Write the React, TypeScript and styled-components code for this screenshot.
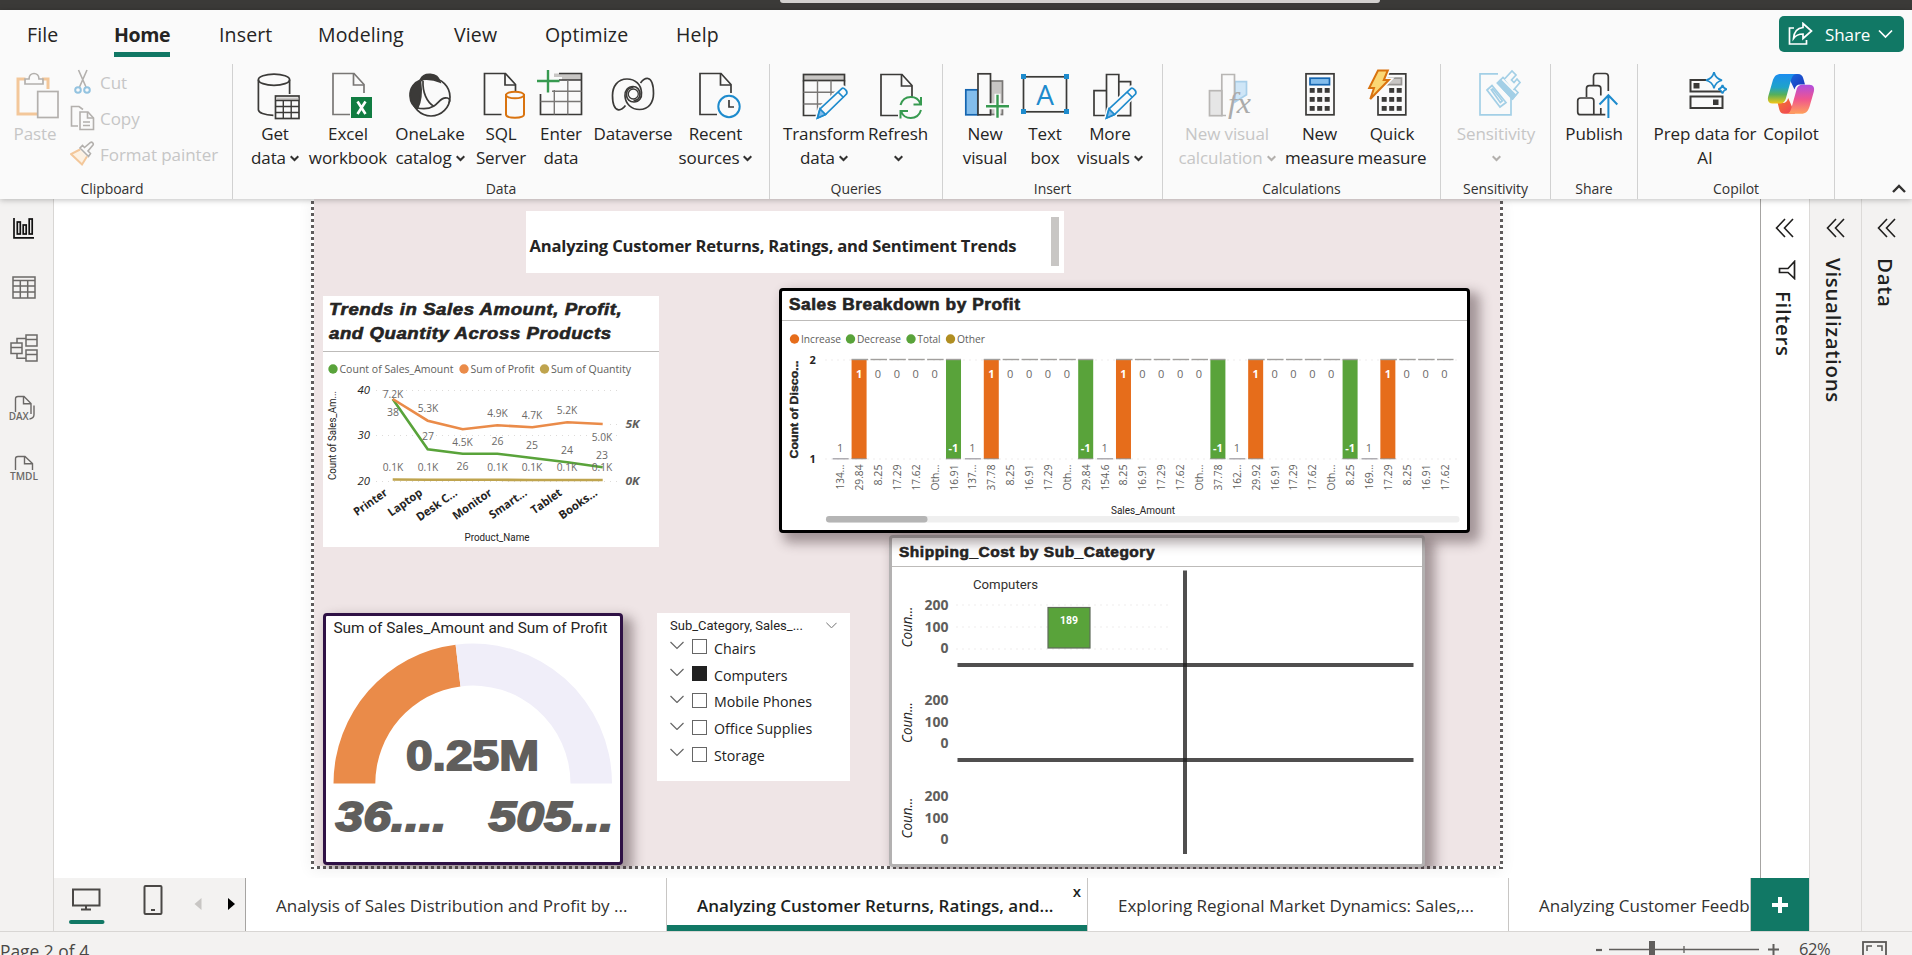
import React from "react";
import styled, { createGlobalStyle, css } from "styled-components";

const UI = `"Open Sans", "Noto Sans", sans-serif`;
const DIN = `Roboto, "Liberation Sans", sans-serif`;
const HEAVY = `"Liberation Sans", Inter, sans-serif`;

const GlobalStyle = createGlobalStyle`
  * { box-sizing: border-box; }
  html, body { margin: 0; height: 100%; overflow: hidden; background: #fff; }
  body { font-family: ${UI}; color: #252423; }
  svg { display: block; flex: none; }
`;

/* ---------- shell ---------- */

const Shell = styled.div`
  width: 1912px;
  height: 955px;
  display: flex;
  flex-direction: column;
  overflow: hidden;
`;

const TitleBar = styled.div`
  height: 10px;
  flex: none;
  background: #3b3a38;
  display: flex;
  justify-content: center;
  padding-left: 248px;
`;

const SearchBox = styled.div`
  width: 600px;
  height: 3px;
  background: #d2d0ce;
  border-radius: 0 0 4px 4px;
`;

const RibbonArea = styled.header`
  height: 189px;
  flex: none;
  background: #fafafa;
  box-shadow: 0 1px 6px rgba(0, 0, 0, 0.26);
  position: relative;
  z-index: 2;
  display: flex;
  flex-direction: column;
`;

const TabRow = styled.nav`
  height: 47px;
  display: flex;
  align-items: stretch;
  padding-left: 27px;
  padding-right: 8px;
`;

const RibbonTab = styled.div<{ $w: number; $active?: boolean; $track?: number }>`
  width: ${(p) => p.$w}px;
  font-size: 19.5px;
  line-height: 49px;
  height: 47px;
  white-space: nowrap;
  letter-spacing: ${(p) => p.$track ?? 0.15}px;
  font-weight: ${(p) => (p.$active ? 700 : 400)};
  span {
    display: inline-block;
    height: 47px;
    ${(p) => p.$active && css`box-shadow: inset 0 -5px 0 #117865;`}
  }
`;

const ShareButton = styled.button`
  margin-left: auto;
  margin-top: 6px;
  width: 125px;
  height: 36px;
  border: 0;
  border-radius: 5px;
  background: #117865;
  color: #fff;
  font: 17px ${UI};
  display: flex;
  align-items: center;
  padding: 0 11px 0 9px;
  gap: 12px;
  span { flex: 1; text-align: left; letter-spacing: -0.1px; }
  svg:last-child { margin-left: -8px; }
`;

const GroupRow = styled.div`
  display: flex;
  flex: 1;
  padding-top: 7px;
  padding-bottom: 3px;
`;

const Group = styled.section<{ $w: number }>`
  width: ${(p) => p.$w}px;
  flex: none;
  border-right: 1px solid #d1d1d1;
  display: flex;
  flex-direction: column;
`;

const GroupBody = styled.div`
  height: 114px;
  display: flex;
  padding-top: 4px;
`;

const GroupName = styled.div<{ $shift?: number }>`
  font-size: 14px;
  line-height: 20px;
  text-align: center;
  color: #323130;
  letter-spacing: -0.05px;
  padding-right: ${(p) => Math.max(0, -(p.$shift ?? 0))}px;
  margin-top: 1px;
`;

const Command = styled.div<{ $w: number; $gap?: number; $off?: boolean }>`
  width: ${(p) => p.$w}px;
  margin-left: ${(p) => p.$gap ?? 0}px;
  flex: none;
  display: flex;
  flex-direction: column;
  align-items: center;
  color: ${(p) => (p.$off ? "#c6c6c6" : "#252423")};
`;

const CommandLabel = styled.div`
  margin-top: 2px;
  font-size: 17px;
  line-height: 24px;
  letter-spacing: -0.1px;
  text-align: center;
  white-space: nowrap;
  display: flex;
  flex-direction: column;
  align-items: center;
  span { display: flex; align-items: center; gap: 4px; height: 24px; }
`;

const SmallCommands = styled.div`
  display: flex;
  flex-direction: column;
  margin-left: 5px;
  margin-top: -4px;
`;

const SmallCommand = styled.div`
  display: flex;
  align-items: center;
  height: 36px;
  gap: 5px;
  font-size: 17px;
  letter-spacing: -0.05px;
  color: #c6c6c6;
  white-space: nowrap;
`;

const CollapseSlot = styled.div`
  flex: 1;
  display: flex;
  justify-content: flex-end;
  align-items: flex-end;
  padding: 0 6px 6px 0;
`;

/* ---------- main area ---------- */

const Main = styled.main`
  flex: 1;
  min-height: 0;
  display: flex;
`;

const Rail = styled.aside`
  width: 54px;
  flex: none;
  background: #f3f2f1;
  border-right: 1px solid #d8d6d4;
  display: flex;
  flex-direction: column;
  align-items: flex-start;
  padding: 14px 0 0 8px;
  gap: 28px;
`;

const Center = styled.div`
  width: 1755px;
  flex: none;
  display: flex;
  flex-direction: column;
`;

const CenterTop = styled.div`
  flex: 1;
  min-height: 0;
  display: flex;
`;

const Workspace = styled.div`
  flex: 1;
  background: #fff;
  padding-left: 257px;
  overflow: hidden;
`;

const Pane = styled.aside<{ $w: number; $light?: boolean }>`
  width: ${(p) => p.$w}px;
  flex: none;
  background: ${(p) => (p.$light ? "#fff" : "#f3f2f1")};
  border-left: 1px solid ${(p) => (p.$light ? "#a6a4a2" : "#dcdad8")};
  display: flex;
  flex-direction: column;
  align-items: center;
  padding-top: 19px;
`;

const PaneTitle = styled.div<{ $top: number }>`
  writing-mode: vertical-rl;
  font-size: 20.5px;
  line-height: 24px;
  font-weight: 600;
  color: #201f1e;
  margin-top: ${(p) => p.$top}px;
  margin-right: 3px;
  letter-spacing: 0.65px;
  white-space: nowrap;
`;

/* ---------- report canvas ---------- */

const Canvas = styled.div`
  width: 1192px;
  height: 670px;
  position: relative;
  overflow: hidden;
  background:
    repeating-linear-gradient(to bottom, #fff 0 2px, #5f5c5c 2px 5px, #fff 5px 6px) 0 0 / 3px 100% no-repeat,
    repeating-linear-gradient(to bottom, #fff 0 2px, #5f5c5c 2px 5px, #fff 5px 6px) 100% 0 / 3px 100% no-repeat,
    repeating-linear-gradient(to right, #5f5c5c 0 3px, #fff 3px 6px) 0 100% / 100% 3px no-repeat,
    #efe5e6;
`;

const CanvasShadow = styled.div`
  width: 1192px;
  height: 670px;
  box-shadow: 0 2px 14px rgba(0, 0, 0, 0.06);
`;

const Visual = styled.section<{
  $x: number; $y: number; $w: number; $h: number; $edge?: string; $shadow?: boolean; $z?: number;
}>`
  position: absolute;
  left: ${(p) => p.$x}px;
  top: ${(p) => p.$y}px;
  width: ${(p) => p.$w}px;
  height: ${(p) => p.$h}px;
  z-index: ${(p) => p.$z ?? 0};
  background: #fff;
  ${(p) => p.$edge && css`border: 3.5px solid ${p.$edge}; border-radius: 4px;`}
  ${(p) => p.$shadow && css`box-shadow: 7px 7px 12px 3px rgba(60, 40, 45, 0.42);`}
`;

const VisualHeader = styled.h2<{ $size: number; $lh: number; $h: number; $italic?: boolean; $pad: number; $stretch: number; $top?: number }>`
  margin: 0;
  height: ${(p) => p.$h}px;
  padding: ${(p) => p.$top ?? 2}px 0 0 ${(p) => p.$pad}px;
  border-bottom: 1.5px solid #bdbbb9;
  font-family: ${HEAVY};
  font-weight: 700;
  font-style: ${(p) => (p.$italic ? "italic" : "normal")};
  font-size: ${(p) => p.$size}px;
  line-height: ${(p) => p.$lh}px;
  letter-spacing: 0.5px;
  -webkit-text-stroke: 0.6px #252423;
  white-space: nowrap;
  span {
    display: inline-block;
    transform: scaleX(${(p) => p.$stretch});
    transform-origin: 0 50%;
  }
`;

const TextBox = styled.div`
  height: 100%;
  display: flex;
  align-items: flex-end;
  justify-content: space-between;
  padding: 6px 5px 16px 4px;
  font-size: 16.6px;
  line-height: 22px;
  font-weight: 700;
  white-space: nowrap;
  letter-spacing: -0.2px;
`;

const ScrollThumb = styled.i`
  width: 8px;
  height: 49px;
  background: #c8c6c4;
  align-self: flex-start;
`;

const SlicerHead = styled.div`
  display: flex;
  align-items: center;
  justify-content: space-between;
  height: 22px;
  padding: 2px 13px 0 13px;
  font: 13px ${DIN};
  letter-spacing: 0;
  color: #252423;
`;

const SlicerItem = styled.div`
  display: flex;
  align-items: center;
  height: 26.8px;
  padding-left: 13px;
  font-size: 14.2px;
  color: #212121;
  svg { margin-top: -6px; }
`;

const CheckBox = styled.i<{ $on?: boolean }>`
  width: 15px;
  height: 15px;
  margin: -3px 7px 0 8px;
  border: 1px solid ${(p) => (p.$on ? "#212121" : "#666")};
  background: ${(p) => (p.$on ? "#212121" : "#fff")};
`;

/* ---------- page tabs and status bar ---------- */

const PageBar = styled.div`
  height: 53px;
  flex: none;
  display: flex;
  background: #fff;
  position: relative;
`;

const ViewSwitch = styled.div`
  width: 192px;
  flex: none;
  background: #f3f2f1;
  border-right: 1px solid #a6a4a2;
`;

const PageTab = styled.div<{ $active?: boolean; $w?: number }>`
  width: ${(p) => p.$w ?? 421}px;
  flex: none;
  padding-left: 30px;
  font-size: 17px;
  line-height: 55px;
  white-space: nowrap;
  overflow: hidden;
  color: #323130;
  border-right: 1px solid #c8c6c4;
  position: relative;
  ${(p) => p.$active && css`font-weight: 600; color: #201f1e; box-shadow: inset 0 -6px 0 #117865;`}
`;

const CloseMark = styled.span`
  position: absolute;
  right: 6px;
  top: 3px;
  font-size: 15px;
  line-height: 20px;
`;

const AddPage = styled.div`
  width: 58px;
  flex: none;
  background: #117865;
  display: flex;
  align-items: center;
  justify-content: center;
`;

const StatusBar = styled.footer`
  height: 24px;
  flex: none;
  background: #f3f2f1;
  border-top: 1px solid #d8d6d4;
  display: flex;
  justify-content: space-between;
  font-size: 17.4px;
  line-height: 38px;
  color: #4a4846;
  overflow: hidden;
`;

const ZoomTools = styled.div`
  display: flex;
  padding-right: 25px;
  letter-spacing: -0.4px;
  span { font-size: 16.5px; line-height: 34px; width: 36px; margin: 0 27px 0 0; }
`;

/* ---------- icons ---------- */

const DARK = "#3b3a38";
const BLUE = "#1e8bcd";
const GREEN = "#379a50";

const Ico = ({ children, stroke = DARK }: { children: React.ReactNode; stroke?: string }) => (
  <svg width="52" height="52" viewBox="0 0 52 52" fill="none" stroke={stroke} strokeWidth="1.7" overflow="visible">
    {children}
  </svg>
);

const Down = ({ color = "#323130" }: { color?: string }) => (
  <svg width="9" height="7" viewBox="0 0 9 7" fill="none" stroke={color} strokeWidth="2">
    <path d="M.7 1.2 4.5 5l3.8-3.8" />
  </svg>
);

const Doc = ({ x, open = true, c }: { x: number; open?: boolean; c?: string }) => (
  <g stroke={c}>
    <path d={`M${x + 17} 46.5H${x}V5.5h21l10 11V${open ? 25 : 28}`} />
    <path d={`M${x + 20.5} 5.5v11.5h10.5`} />
  </g>
);

const Pencil = ({ dx = 0 }: { dx?: number }) => (
  <g transform={`translate(${dx} 0)`} stroke={BLUE}>
    <path d="M19.5 50.5 22 41 43.5 20.5c2-1.8 6.8 2 5 5L27.5 46.5Z" fill="#fafafa" stroke="#fafafa" strokeWidth="5" />
    <path d="M19.5 50 22 41 43.5 20.8c2-1.8 6.8 2 5 5.3L27.5 46.5Z" fill="#fafafa" />
    <path d="M19.5 50 22 41l5.5 5.5Z" fill="#83bdec" />
    <path d="m40 24 5.5 5.5" />
  </g>
);

const GetDataIcon = () => (
  <Ico>
    <ellipse cx="25" cy="11.7" rx="15.6" ry="5.6" />
    <path d="M9.4 11.7v30c0 3 6 5.4 15 5.6M40.6 11.7V26" />
    <rect x="26.5" y="28" width="23.5" height="22.5" fill="#fafafa" />
    <path d="M27 29.5h22.5v3H27z" fill="#c8c6c4" stroke="none" />
    <path d="M26.5 32.5h23.5M26.5 38.5h23.5M26.5 44.5h23.5M34.3 32.5v18M42.2 32.5v18" strokeWidth="1.4" />
  </Ico>
);

const ExcelIcon = () => (
  <Ico>
    <Doc x={11} c="#797775" />
    <rect x="29" y="29" width="21" height="21" fill="#107c41" stroke="none" />
    <path d="m35.5 33.5 8 12.5M43.5 33.5l-8 12.5" stroke="#fff" strokeWidth="2.6" />
  </Ico>
);

const OneLakeIcon = () => (
  <Ico>
    <circle cx="27" cy="29" r="19" />
    <path d="M15.5 12.5C11 14 5.5 20 6 28c.3 5.5 3 10.5 7.5 12.5C17 33 18 25 16.500 14Z" fill={DARK} />
    <path d="M16.5 11.5C18 8 22 6 26.5 6.300c5 .3 8.500 3.700 9.500 7.700-5-2.500-12-3.500-19.500-2.500Z" fill={DARK} />
    <path d="M19 13c-.5 11 3.500 21 11 25.500M12 39.500c7 2 13 1.500 18-1.500s7-9.500 13.500-8c2.500.7 2.500 2.500 1.500 5" />
  </Ico>
);

const SqlIcon = () => (
  <Ico>
    <Doc x={9.5} />
    <g stroke="#d9730f" strokeWidth="2">
      <path d="M31 27v19.500c0 4.200 18 4.200 18 0V27Z" fill="#fafafa" />
      <ellipse cx="40" cy="27" rx="9" ry="3.3" fill="#fafafa" />
    </g>
  </Ico>
);

const EnterDataIcon = () => (
  <Ico>
    <path d="M19 5.5h27v6.500H27V9h-8z" fill="#c8c6c4" stroke="none" />
    <path d="M24 5.5h22.500v41H5.500V26M24 12h22.500" />
    <path d="M19.300 22v24.500M32.800 12v34.500M17 23.300h29.500M5.500 33.500h41" stroke="#797775" strokeWidth="1.4" />
    <path d="M13 2v22.500M2 13h22.500" stroke={GREEN} strokeWidth="2.4" />
  </Ico>
);

const DataverseIcon = () => (
  <Ico>
    <path d="M26.500 19.500c-5 0-7 3.500-7 7 0 5 3.500 7.500 7.500 7.500 5 0 8-4 7.500-9.500C34 16 28 11 20 11 10.500 11 5.500 18.500 5.500 27.500c0 8 1.500 13.500 6 14.300 3 .4 5-1.800 7-4.300" />
    <path d="M26.500 32.500c3.500 0 6.500-2.300 6.500-6.500 0-4.500-3-7.500-7-7.500-5 0-8.500 4-8 9.500.5 8 6.500 13.500 14.500 13.500C42 41.500 46.500 34 46.500 25.500c0-8.500-1.500-14-5.500-15-3.500-.5-5.500 1.800-7.500 4.500" />
    <circle cx="26.300" cy="26" r="5" strokeWidth="1.3" />
  </Ico>
);

const RecentIcon = () => (
  <Ico>
    <Doc x={10} />
    <circle cx="39" cy="38.5" r="10.7" fill="#fafafa" stroke={BLUE} strokeWidth="2" />
    <path d="M39 32v7h5" />
  </Ico>
);

const TransformIcon = () => (
  <Ico>
    <rect x="5.5" y="6.5" width="41" height="6" fill="#c8c6c4" />
    <path d="M5.500 12.500v35h15M46.500 12.500V20" />
    <path d="M19.500 12.500v30M33 12.500V30M5.500 24.300H38M5.500 36H26" stroke="#797775" strokeWidth="1.4" />
    <Pencil />
  </Ico>
);

const RefreshIcon = () => (
  <Ico>
    <g transform="translate(0 1)"><Doc x={9} open={false} /></g>
    <g stroke={GREEN} strokeWidth="2">
      <path d="M28.500 37c1.500-5 5.500-8 10.300-8 4.500 0 8 2.500 9.500 6.500M49 29v7.500h-7.500M49 42c-1.500 5-5.500 8-10.300 8-4.500 0-8-2.500-9.500-6.500M28.500 50.500V43H36" />
    </g>
  </Ico>
);

const Plus = ({ x, y }: { x: number; y: number }) => (
  <>
    <path d={`M${x} ${y - 12.5}v25M${x - 12.5} ${y}h25`} stroke="#fafafa" strokeWidth="6" />
    <path d={`M${x} ${y - 11.5}v23M${x - 11.5} ${y}h23`} stroke={GREEN} strokeWidth="2.4" />
  </>
);

const NewVisualIcon = () => (
  <Ico>
    <rect x="6.8" y="21.8" width="12" height="25" fill="#83bdec" stroke="#1565b0" />
    <rect x="31.5" y="13" width="12" height="33.5" fill="#c8c6c4" stroke="#797775" />
    <rect x="19" y="5.8" width="12.5" height="41" fill="#fafafa" />
    <Plus x={38.5} y={38.3} />
  </Ico>
);

const IconGlyph = styled.text<{ $fx?: boolean }>`
  stroke: none;
  font-family: ${(p) => (p.$fx ? `"Liberation Serif", serif` : UI)};
  font-style: ${(p) => (p.$fx ? "italic" : "normal")};
  font-size: ${(p) => (p.$fx ? 30 : 28)}px;
  fill: ${(p) => (p.$fx ? "#ababab" : BLUE)};
`;

const TextBoxIcon = () => (
  <Ico>
    <rect x="4.5" y="8.8" width="43" height="35" />
    <g fill={BLUE} stroke="none">
      <path d="M2 6h5v5H2zM45 6h5v5h-5zM2 41h5v5H2zM45 41h5v5h-5z" />
    </g>
    <IconGlyph x="26" y="36.5" textAnchor="middle">A</IconGlyph>
  </Ico>
);

const MoreVisualsIcon = () => (
  <Ico>
    <path d="M22.500 22.700H10v24.800h13M34.800 13.700h11.800v34H33M22.500 47.500V6.500h12.300v24" />
    <Pencil dx={3} />
  </Ico>
);

const VisualCalcIcon = () => (
  <Ico stroke="#b8b6b4">
    <rect x="8.5" y="22.7" width="12.3" height="25" fill="#e6e6e6" />
    <path d="M34 13.700h11.500v13L34 34z" fill="#cfe6f7" stroke="#a9cfe9" />
    <path d="M25 47.500h-4.200V6.500h12.700V26" />
    <IconGlyph $fx x="27" y="44.5" textLength="23" lengthAdjust="spacingAndGlyphs">fx</IconGlyph>
  </Ico>
);

const Keys = ({ from = 0 }: { from?: number }) => (
  <g fill={DARK} stroke="none">
    {[22, 31, 40].map((y) =>
      [15.7, 23.2, 30.7].map((x, i) => (i < from && y < 30 ? null : <rect key={`${x}${y}`} x={x} y={y - 2} width="5" height="4.8" />)),
    )}
  </g>
);

const MeasureIcon = () => (
  <Ico>
    <rect x="12" y="5.8" width="28" height="41" />
    <rect x="16" y="10.2" width="19.5" height="6.5" fill="#83bdec" stroke="#1565b0" />
    <Keys />
  </Ico>
);

const QuickMeasureIcon = () => (
  <Ico>
    <path d="M20 5.800h19.800v41H12V28" />
    <path d="M20 10.200h15.500v6.500H20z" fill="#c8c6c4" stroke="#979593" />
    <Keys from={1} />
    <path d="M12 2.500h9.800L17.800 12h5L4.300 31 8 20H3.200Z" fill="#fbd774" stroke="#fafafa" strokeWidth="5" />
    <path d="M12 2.500h9.800L17.800 12h5L4.300 31 8 20H3.200Z" fill="#fbd774" stroke="#d9730f" strokeWidth="2" />
  </Ico>
);

const SensitivityIcon = () => (
  <Ico stroke="#a3cfe6">
    <path d="M28 5.800H10v41h31V30" />
    <path d="m27.500 15 5.500-5.500 15 15-5.500 6.500Z" fill="#fafafa" />
    <path d="m27.500 15 3-3 15 15-3 4Z" fill="#a3cfe6" />
    <path d="m34.500 11 7.500-8 4 4-4.500 5 2.500 2.500 3-3.500 3 3.500-6.500 7.500" fill="#fafafa" />
    <path d="m17 22 5-4.500L36 34.500l-6 4.500Z" fill="#fafafa" />
    <path d="m21.300 21.800 1.500-1 9.500 12-2 1.700Z" />
  </Ico>
);

const PublishIcon = () => (
  <Ico>
    <path d="M25.500 17V8.500c0-2 1-3 2.800-3h9c2 0 3 1 3 3V23M18.500 29V20.500c0-2 1-2.800 2.800-2.800h8.500c2 0 3 .8 3 2.800v7" />
    <path d="M12.500 30H23c2 0 2.800 1 2.800 2.800v13.900H12.500c-2 0-2.800-1-2.800-2.800V32.800c0-1.800 1-2.800 2.800-2.800ZM25.800 46.700h11.500M32.800 40v6.700" />
    <path d="M40.400 50V27M31.500 36.500l8.900-9.300 8.900 9.300" stroke={BLUE} strokeWidth="2" />
  </Ico>
);

const Sparkle = ({ x, y, r }: { x: number; y: number; r: number }) => (
  <path
    d={`M${x} ${y - r}Q${x + r * 0.2} ${y - r * 0.2} ${x + r} ${y}Q${x + r * 0.2} ${y + r * 0.2} ${x} ${y + r}Q${x - r * 0.2} ${y + r * 0.2} ${x - r} ${y}Q${x - r * 0.2} ${y - r * 0.2} ${x} ${y - r}Z`}
    fill="#fafafa" stroke={BLUE}
  />
);

const PrepDataIcon = () => (
  <Ico>
    <path d="M27 12H11.500v11.500h32" strokeWidth="2" />
    <rect x="11.5" y="28.5" width="32" height="11.5" strokeWidth="2" />
    <path d="M14.500 15h6v5.500h-6zM34 31.500h5.500V37H34z" fill={DARK} stroke="none" />
    <Sparkle x={35} y={12.3} r={8} />
    <Sparkle x={43.5} y={21.3} r={4.3} />
  </Ico>
);

const CopilotIcon = () => (
  <Ico>
    <defs>
      <linearGradient id="cpA" x1="0" y1="0" x2="0" y2="1">
        <stop offset="0" stopColor="#1b8df0" /><stop offset=".45" stopColor="#1fa3c9" />
        <stop offset=".7" stopColor="#57b05a" /><stop offset="1" stopColor="#f3c716" />
      </linearGradient>
      <linearGradient id="cpB" x1="0" y1="0" x2="0" y2="1">
        <stop offset="0" stopColor="#b04ee0" /><stop offset=".5" stopColor="#f0558e" />
        <stop offset="1" stopColor="#ffa15c" />
      </linearGradient>
      <linearGradient id="cpC" x1="0" y1="0" x2="1" y2="1">
        <stop offset="0" stopColor="#1a6fe0" /><stop offset="1" stopColor="#1c2fb8" />
      </linearGradient>
      <linearGradient id="cpD" x1="0" y1="0" x2="1" y2="1">
        <stop offset="0" stopColor="#f47a2c" /><stop offset="1" stopColor="#ef3d5c" />
      </linearGradient>
    </defs>
    <g stroke="none">
      <path d="M22 6h11c3 0 4.500 1.500 5.300 4.500l1.700 6h-5c-3 0-4.500 1.500-5.500 5Z" fill="url(#cpC)" />
      <path d="M30 45.700H19.500c-3 0-4.500-1.500-5.300-4.500L12.700 35h5c3 0 4.500-1.500 5.500-5Z" fill="url(#cpD)" />
      <path d="M16 6h15c-3 .5-4 2.500-5 6l-5 18c-1 3.500-2.500 5.500-6.500 5.500H7.500c-4 0-5.300-3-4.300-7l4.300-15C9 8.500 11 6 16 6Z" fill="url(#cpA)" />
      <path d="M36 45.700H21.500c3-.5 4-2.500 5-6l5-18c1-3.500 2.500-5 6.500-5h6.500c4 0 5.300 3 4.300 7l-4.300 15c-1.500 4.500-3.500 7-8.500 7Z" fill="url(#cpB)" />
    </g>
  </Ico>
);

const PasteIcon = () => (
  <Ico stroke="#b3b0ad">
    <path d="M16.500 11H9v35h19M33 11h6v10" stroke="#f3c79a" strokeWidth="3" />
    <path d="M16 16v-5h4c0-3.500 2.500-5.500 5-5.500s5 2 5 5.500h4v5Z" />
    <rect x="28.7" y="23.5" width="20.3" height="26" fill="#fafafa" />
  </Ico>
);

const CutIcon = () => (
  <svg width="25" height="26" viewBox="0 0 25 26" fill="none" stroke="#b3b0ad" strokeWidth="1.6">
    <path d="M8.500 1 16 18M17 1 9.500 18" />
    <g stroke="#93c3e0" strokeWidth="2"><circle cx="8" cy="21" r="2.8" /><circle cx="17" cy="21" r="2.8" /></g>
  </svg>
);
const CopyIcon = () => (
  <svg width="25" height="26" viewBox="0 0 25 26" fill="none" stroke="#b3b0ad" strokeWidth="1.6">
    <path d="M8 21H1.500V1.500H9l4 3" />
    <path d="M10 7h8l5.500 6v11.500H10Z" /><path d="M17.500 7v6h6M13 17h7M13 20.500h7" />
  </svg>
);
const PainterIcon = () => (
  <svg width="25" height="26" viewBox="0 0 25 26" fill="none" stroke="#b3b0ad" strokeWidth="1.6">
    <path d="M10 8.500 1 13l11 10.500 5-8" stroke="#f3c79a" fill="#fdf1e2" strokeWidth="2" />
    <path d="m10 7 8.500 8.500 2-3-2.500-2.500 5-6c1-1.500-1-3.500-2.500-2.500l-6 5-2-2Z" fill="#fafafa" />
  </svg>
);

/* ---------- ribbon ---------- */

type Cmd = { icon: React.ReactNode; lines: [string, string?]; w: number; gap?: number; menu?: boolean; off?: boolean };

const Commands = ({ items }: { items: Cmd[] }) => (
  <>
    {items.map((c) => (
      <Command key={c.lines.join(" ")} $w={c.w} $gap={c.gap} $off={c.off}>
        {c.icon}
        <CommandLabel>
          <span>{c.lines[0]}</span>
          {(c.lines[1] !== undefined || c.menu) && (
            <span>{c.lines[1]}{c.menu && <Down color={c.off ? "#b3b0ad" : undefined} />}</span>
          )}
        </CommandLabel>
      </Command>
    ))}
  </>
);

const groups: { name: string; w: number; items: Cmd[] }[] = [
  {
    name: "Data", w: 537,
    items: [
      { icon: <GetDataIcon />, lines: ["Get", "data"], w: 60, gap: 12, menu: true },
      { icon: <ExcelIcon />, lines: ["Excel", "workbook"], w: 80, gap: 3 },
      { icon: <OneLakeIcon />, lines: ["OneLake", "catalog"], w: 74, gap: 5, menu: true },
      { icon: <SqlIcon />, lines: ["SQL", "Server"], w: 52, gap: 8 },
      { icon: <EnterDataIcon />, lines: ["Enter", "data"], w: 52, gap: 8 },
      { icon: <DataverseIcon />, lines: ["Dataverse"], w: 80, gap: 6 },
      { icon: <RecentIcon />, lines: ["Recent", "sources"], w: 76, gap: 4.5, menu: true },
    ],
  },
  {
    name: "Queries", w: 173,
    items: [
      { icon: <TransformIcon />, lines: ["Transform", "data"], w: 80, gap: 14, menu: true },
      { icon: <RefreshIcon />, lines: ["Refresh"], w: 60, gap: 4, menu: true },
    ],
  },
  {
    name: "Insert", w: 220,
    items: [
      { icon: <NewVisualIcon />, lines: ["New", "visual"], w: 52, gap: 16 },
      { icon: <TextBoxIcon />, lines: ["Text", "box"], w: 52, gap: 8 },
      { icon: <MoreVisualsIcon />, lines: ["More", "visuals"], w: 68, gap: 5, menu: true },
    ],
  },
  {
    name: "Calculations", w: 278,
    items: [
      { icon: <VisualCalcIcon />, lines: ["New visual", "calculation"], w: 100, gap: 14, off: true, menu: true },
      { icon: <MeasureIcon />, lines: ["New", "measure"], w: 68, gap: 8.5 },
      { icon: <QuickMeasureIcon />, lines: ["Quick", "measure"], w: 68, gap: 4.5 },
    ],
  },
  { name: "Sensitivity", w: 110, items: [{ icon: <SensitivityIcon />, lines: ["Sensitivity"], w: 84, gap: 13, off: true, menu: true }] },
  { name: "Share", w: 87, items: [{ icon: <PublishIcon />, lines: ["Publish"], w: 60, gap: 13 }] },
  {
    name: "Copilot", w: 197,
    items: [
      { icon: <PrepDataIcon />, lines: ["Prep data for", "AI"], w: 104, gap: 15 },
      { icon: <CopilotIcon />, lines: ["Copilot"], w: 60, gap: 4 },
    ],
  },
];

const Ribbon = () => (
  <RibbonArea>
    <TabRow>
      <RibbonTab $w={87}><span>File</span></RibbonTab>
      <RibbonTab $w={105} $active $track={-0.35}><span>Home</span></RibbonTab>
      <RibbonTab $w={99}><span>Insert</span></RibbonTab>
      <RibbonTab $w={136}><span>Modeling</span></RibbonTab>
      <RibbonTab $w={91}><span>View</span></RibbonTab>
      <RibbonTab $w={131}><span>Optimize</span></RibbonTab>
      <RibbonTab $w={80}><span>Help</span></RibbonTab>
      <ShareButton>
        <svg width="25" height="24" viewBox="0 0 25 24" fill="none" stroke="#fff" strokeWidth="1.7">
          <path d="M6 6H1.500v16h17v-4" />
          <path d="M15 1.500 23.500 9 15 16.500V12c-4 0-7 1-9.500 4.500C6 10 9 6 15 5.500Z" />
        </svg>
        <span>Share</span>
        <svg width="15" height="10" viewBox="0 0 15 10" fill="none" stroke="#fff" strokeWidth="1.7"><path d="m1 1.500 6.500 6.500L14 1.500" /></svg>
      </ShareButton>
    </TabRow>
    <GroupRow>
      <Group $w={233}>
        <GroupBody>
          <Command $w={60} $gap={5} $off>
            <PasteIcon />
            <CommandLabel><span>Paste</span></CommandLabel>
          </Command>
          <SmallCommands>
            <SmallCommand><CutIcon />Cut</SmallCommand>
            <SmallCommand><CopyIcon />Copy</SmallCommand>
            <SmallCommand><PainterIcon />Format painter</SmallCommand>
          </SmallCommands>
        </GroupBody>
        <GroupName $shift={-8}>Clipboard</GroupName>
      </Group>
      {groups.map((g) => (
        <Group key={g.name} $w={g.w}>
          <GroupBody><Commands items={g.items} /></GroupBody>
          <GroupName>{g.name}</GroupName>
        </Group>
      ))}
      <CollapseSlot>
        <svg width="14" height="9" viewBox="0 0 14 9" fill="none" stroke="#323130" strokeWidth="2.4"><path d="m1 8 6-6 6 6" /></svg>
      </CollapseSlot>
    </GroupRow>
  </RibbonArea>
);

/* ---------- left rail ---------- */

const RailGlyph = styled.text`
  font: 600 10.5px ${UI};
  fill: #6b6967;
  stroke: none;
`;

const LeftRail = () => (
  <Rail>
    <svg width="32" height="32" viewBox="0 0 32 32" fill="none" stroke="#111" strokeWidth="1.7">
      <path d="M6 5v19.800h20" /><rect x="9.3" y="9" width="3" height="12" /><rect x="15.2" y="12" width="3" height="9" /><rect x="21.2" y="6" width="3" height="15" />
    </svg>
    <svg width="32" height="32" viewBox="0 0 32 32" fill="none" stroke="#6b6967" strokeWidth="1.5">
      <rect x="5" y="4" width="22" height="21" /><path d="M5 7.500h22M5 13h22M5 19h22M12.300 7.500V25M19.700 7.500V25" />
    </svg>
    <svg width="32" height="32" viewBox="0 -1 32 32" fill="none" stroke="#6b6967" strokeWidth="1.5">
      <rect x="3" y="9" width="11" height="10.5" /><path d="M3 13.500h11" /><rect x="18" y="1" width="11" height="11" /><path d="M18 5.500h11" />
      <rect x="18" y="16" width="11" height="11" /><path d="M18 20.500h11M9 9V4.500h9M9 19.500v4.800h9" />
    </svg>
    <svg width="34" height="32" viewBox="0 -1 34 32" fill="none" stroke="#6b6967" strokeWidth="1.4">
      <path d="M7.500 18V5c0-1.500.5-2.500 2.500-2.500h6L23 9.500V20M15.500 2.500v7.200H23M26 11.500v9c0 2.500-1.500 4-4.500 4.500" />
      <RailGlyph x=".8" y="26" textLength="20" lengthAdjust="spacingAndGlyphs">DAX</RailGlyph>
    </svg>
    <svg width="34" height="32" viewBox="0 -1 34 32" fill="none" stroke="#6b6967" strokeWidth="1.4">
      <path d="M7.500 16V5c0-1.500.5-2.500 2.500-2.500h7l7.500 7V16M16.500 2.500v7.200h8" />
      <RailGlyph x="2" y="26" textLength="28" lengthAdjust="spacingAndGlyphs">TMDL</RailGlyph>
    </svg>
  </Rail>
);

/* ---------- charts ---------- */

const ChartText = styled.text<{ $size: number; $fill?: string; $bold?: boolean; $italic?: boolean; $font?: string; $heavy?: number }>`
  font-family: ${(p) => (p.$heavy ? HEAVY : p.$font ?? UI)};
  font-size: ${(p) => p.$size}px;
  font-weight: ${(p) => (p.$bold || p.$heavy ? 700 : 400)};
  font-style: ${(p) => (p.$italic ? "italic" : "normal")};
  fill: ${(p) => p.$fill ?? "#605e5c"};
  ${(p) => p.$heavy && css`stroke: ${p.$fill ?? "#605e5c"}; stroke-width: ${p.$heavy}px;`}
`;

const fit = (n: number) => ({ textLength: n, lengthAdjust: "spacingAndGlyphs" as const });

const LegendSvg = ({ y, items }: { y: number; items: [number, string, string, number][] }) => (
  <g>
    {items.map(([cx, color, label, len]) => (
      <g key={label}>
        <circle cx={cx} cy={y} r="4.7" fill={color} />
        <ChartText $size={11} x={cx + 6.5} y={y + 4} {...fit(len)}>{label}</ChartText>
      </g>
    ))}
  </g>
);

const lineX = [392.7, 427.7, 462.7, 497.3, 532.3, 567.3, 602.7];
const line = (ys: number[]) => ys.map((y, i) => `${lineX[i]},${y}`).join(" ");
const products = ["Printer", "Laptop", "Desk C...", "Monitor", "Smart...", "Tablet", "Books..."];
const productLen = [38, 39, 47, 45, 43, 35, 44];
const pointLabels: [number, number, string][] = [
  [393, 398, "7.2K"], [393, 416, "38"], [428, 412, "5.3K"], [428, 440, "27"], [462.5, 446, "4.5K"], [462.5, 470, "26"],
  [497.5, 417, "4.9K"], [497.5, 445, "26"], [532, 419, "4.7K"], [532, 449, "25"], [567, 414, "5.2K"], [567, 454, "24"],
  [602, 441, "5.0K"], [602, 459, "23"], [393, 471, "0.1K"], [428, 471, "0.1K"], [497.5, 471, "0.1K"], [532, 471, "0.1K"],
  [567, 471, "0.1K"], [602, 471, "0.1K"],
];

const TrendChart = () => (
  <svg width="335" height="195" viewBox="323 352 335 195">
    <LegendSvg y={369} items={[[333, "#59a33a", "Count of Sales_Amount", 114], [464, "#ea8b49", "Sum of Profit", 64], [544.5, "#bfa44e", "Sum of Quantity", 80]]} />
    <path d="M376 390.500h242M376 435.500h242M376 481.500h242M610 424.500h8" stroke="#dddbd9" strokeDasharray="1 5" />
    {[["40", 394], ["30", 439], ["20", 485]].map(([t, y]) => (
      <ChartText key={t} $size={11.5} $italic $fill="#252423" x="357.5" y={y} {...fit(12.5)}>{t}</ChartText>
    ))}
    <ChartText $size={11} $italic $bold x="625.5" y="428" {...fit(14)}>5K</ChartText>
    <ChartText $size={11} $italic $bold x="625.5" y="485" {...fit(14)}>0K</ChartText>
    <ChartText $size={10} $font={DIN} $fill="#252423" transform="translate(336 480) rotate(-90)" {...fit(89)}>Count of Sales_Am...</ChartText>
    <polyline points={line([479.5, 479.7, 479.8, 479.8, 480, 480, 480])} fill="none" stroke="#bfa44e" strokeWidth="2.6" />
    <polyline points={line([399, 449.3, 453.7, 453.7, 458, 462.3, 467.3])} fill="none" stroke="#59a33a" strokeWidth="2.6" />
    <polyline points={line([399, 420.7, 429.3, 425.3, 427.3, 422.3, 424])} fill="none" stroke="#ea8b49" strokeWidth="2.6" />
    {pointLabels.map(([x, y, t]) => (
      <ChartText key={`${x}-${y}`} $size={11} $fill="#6b6967" x={x - (t.length > 2 ? 10.3 : 6)} y={y} {...fit(t.length > 2 ? 20.6 : 12)}>{t}</ChartText>
    ))}
    {products.map((p, i) => (
      <g key={p} transform={`translate(${lineX[i] - 4.5} 494.5) rotate(-35)`}>
        <ChartText $size={11.5} $bold $fill="#252423" x={-productLen[i]} y="0" {...fit(productLen[i])}>{p}</ChartText>
      </g>
    ))}
    <ChartText $size={10} $font={DIN} $fill="#252423" x="464.5" y="541" {...fit(65)}>Product_Name</ChartText>
  </svg>
);

const steps = [
  "134...", "29.84", "8.25", "17.29", "17.62", "Oth...", "16.91", "137...", "37.78", "8.25", "16.91", "17.29", "Oth...", "29.84",
  "154.6", "8.25", "16.91", "17.29", "17.62", "Oth...", "37.78", "162...", "29.92", "16.91", "17.29", "17.62", "Oth...", "8.25",
  "169...", "17.29", "8.25", "16.91", "17.62",
];

const stepKind = (i: number) => (i % 7 === 0 ? "base" : i % 7 === 1 ? "up" : [6, 13, 20, 27].includes(i) ? "down" : "flat");
const stepColor = { up: "#e66d1b", down: "#59a33a", base: "", flat: "" };
const stepLabel = { base: "1", up: "1", down: "-1", flat: "0" };

const WaterfallChart = () => (
  <svg width="684" height="208" viewBox="782.5 321.5 684 208">
    <LegendSvg y={339.5} items={[[795, "#e66d1b", "Increase", 40], [851, "#59a33a", "Decrease", 44], [911.5, "#59a33a", "Total", 23], [951, "#b08e22", "Other", 28]]} />
    <path d="M826 360.500h632M826 459.500h632" stroke="#dddbd9" strokeDasharray="1 5" />
    <ChartText $size={11} $bold $fill="#252423" x="810" y="364.5">2</ChartText>
    <ChartText $size={11} $bold $fill="#252423" x="810" y="463.5">1</ChartText>
    <ChartText $size={11} $heavy={0.4} $fill="#252423" transform="translate(798 459) rotate(-90)" {...fit(98)}>Count of Disco...</ChartText>
    {steps.map((s, i) => {
      const cx = 840.7 + i * 18.885;
      const kind = stepKind(i);
      const filled = kind === "up" || kind === "down";
      const len = s === "8.25" ? 21 : s.startsWith("1") && s.endsWith("...") ? 25 : 26;
      return (
        <g key={i}>
          {kind === "base" && <path d={`M${cx - 7.5} 459.300h16`} stroke="#a19fa5" strokeWidth="1.3" />}
          {filled && <rect x={cx - 7.5} y="360" width="15" height="99.5" fill={stepColor[kind]} />}
          {kind !== "base" && <path d={`M${cx - 7.5} 360h${kind === "down" ? 15 : 16.5}`} stroke="#a19f9d" strokeWidth="1.4" />}
          {filled && <path d={`M${cx - 7.5} 459.300h15`} stroke="#979593" />}
          <ChartText $size={11} $bold={filled} $fill={filled ? "#fff" : "#6b6967"} x={cx} y={kind === "base" || kind === "down" ? 452 : 378} textAnchor="middle">
            {stepLabel[kind]}
          </ChartText>
          <ChartText $size={11} transform={`translate(${cx + 4} ${465 + len}) rotate(-90)`} {...fit(len)}>{s}</ChartText>
        </g>
      );
    })}
    <ChartText $size={10} $font={DIN} $fill="#252423" x="1111.5" y="514" {...fit(64)}>Sales_Amount</ChartText>
    <rect x="826.5" y="516.5" width="633.5" height="6.5" rx="3" fill="#efefef" />
    <rect x="826.5" y="516.5" width="101.500" height="6.5" rx="3.2" fill="#b5b5b5" />
  </svg>
);

const ShippingChart = () => (
  <svg width="529" height="295" viewBox="892.5 567.5 529 295">
    <path d="M957 605.500h213M957 627.500h213M957 649.500h213" stroke="#dddbd9" strokeDasharray="1 5" />
    <ChartText $size={13} $font={DIN} $fill="#323130" x="973.5" y="589" {...fit(65)}>Computers</ChartText>
    {[0, 95.5, 191].map((dy) => (
      <g key={dy} transform={`translate(0 ${dy})`}>
        {[["200", 610, 24], ["100", 632, 24], ["0", 653, 8]].map(([t, y, w]) => (
          <ChartText key={t} $size={14} $bold x={949 - Number(w)} y={y} {...fit(Number(w))}>{t}</ChartText>
        ))}
        <ChartText $size={14} $italic $fill="#252423" transform="translate(912 648) rotate(-90)" {...fit(41)}>Coun...</ChartText>
      </g>
    ))}
    <rect x="1048.5" y="608" width="42" height="40.5" fill="#59a33a" stroke="#5f6b5a" strokeWidth="1.2" />
    <ChartText $size={11.5} $bold $font={DIN} $fill="#fff" x="1060.5" y="624" {...fit(18)}>189</ChartText>
    <g fill="#1f1d1d" fillOpacity=".78">
      <rect x="1183.5" y="571" width="4" height="283.5" />
      <rect x="958" y="663.5" width="456" height="4" />
      <rect x="958" y="758.5" width="456" height="4" />
    </g>
  </svg>
);

const GaugeChart = () => (
  <svg width="293" height="245" viewBox="326.5 616.5 293 245">
    <ChartText $size={14.5} $font={DIN} $fill="#252423" x="334" y="633" {...fit(274)}>Sum of Sales_Amount and Sum of Profit</ChartText>
    <path d="M334 784A139 140 0 0 1 456.100 645.200L461 686.900A97.500 98 0 0 0 375.800 784Z" fill="#ea8b49" />
    <path d="M456.100 645.200A139 140 0 0 1 612.500 784H571A97.500 98 0 0 0 461 686.900Z" fill="#f0eef9" />
    <ChartText $size={42} $heavy={1.8} x="406.5" y="770.5" {...fit(133)}>0.25M</ChartText>
    <ChartText $size={42} $heavy={1.8} $italic x="336" y="831" {...fit(111)}>36....</ChartText>
    <ChartText $size={42} $heavy={1.8} $italic x="489" y="831" {...fit(125)}>505...</ChartText>
  </svg>
);

const Chevron = ({ w }: { w: number }) => (
  <svg width={w} height={w * 0.6} viewBox="0 0 14 8.4" fill="none" stroke="#666" strokeWidth="1.2"><path d="m.5 1 6.500 6.500L13.500 1" /></svg>
);

/* ---------- panes ---------- */

const Collapse = () => (
  <svg width="20" height="20" viewBox="0 0 20 20" fill="none" stroke="#201f1e" strokeWidth="1.6">
    <path d="m10 1-8.500 9L10 19M18 1l-8.500 9 8.500 9" />
  </svg>
);

const FunnelIcon = styled.svg`
  margin-top: 22px;
  margin-left: 4px;
`;

export default function App() {
  return (
    <>
      <GlobalStyle />
      <Shell>
        <TitleBar><SearchBox /></TitleBar>
        <Ribbon />
        <Main>
          <LeftRail />
          <Center>
            <CenterTop>
              <Workspace>
                <CanvasShadow>
                  <Canvas>
                    <Visual $x={214.5} $y={12} $w={538.5} $h={61.5}>
                      <TextBox>Analyzing Customer Returns, Ratings, and Sentiment Trends<ScrollThumb /></TextBox>
                    </Visual>
                    <Visual $x={12} $y={97} $w={335.5} $h={251}>
                      <VisualHeader $size={16} $lh={24} $h={56} $pad={6} $italic $stretch={1.16}>
                        <span>Trends in Sales Amount, Profit,<br />and Quantity Across Products</span>
                      </VisualHeader>
                      <TrendChart />
                    </Visual>
                    <Visual $x={468} $y={89} $w={691} $h={244.5} $edge="#000" $shadow $z={1}>
                      <VisualHeader $size={16} $lh={26} $h={30} $pad={7} $top={1} $stretch={1.08}>
                        <span>Sales Breakdown by Profit</span>
                      </VisualHeader>
                      <WaterfallChart />
                    </Visual>
                    <Visual $x={578} $y={336} $w={536} $h={332} $edge="#b3b1b1" $shadow>
                      <VisualHeader $size={15} $lh={24} $h={29} $pad={7} $stretch={1.033}>
                        <span>Shipping_Cost by Sub_Category</span>
                      </VisualHeader>
                      <ShippingChart />
                    </Visual>
                    <Visual $x={12} $y={414} $w={300} $h={252} $edge="#2f1145" $shadow>
                      <GaugeChart />
                    </Visual>
                    <Visual $x={346} $y={414} $w={193} $h={167.5}>
                      <SlicerHead>Sub_Category, Sales_...<Chevron w={11} /></SlicerHead>
                      {["Chairs", "Computers", "Mobile Phones", "Office Supplies", "Storage"].map((s) => (
                        <SlicerItem key={s}><Chevron w={14} /><CheckBox $on={s === "Computers"} />{s}</SlicerItem>
                      ))}
                    </Visual>
                  </Canvas>
                </CanvasShadow>
              </Workspace>
              <Pane $w={49} $light>
                <Collapse />
                <FunnelIcon width="18" height="20" viewBox="0 0 18 20" fill="none" stroke="#201f1e" strokeWidth="1.7">
                  <path d="M16.500 1.500v17L10 12.500H1.500v-4H10Z" />
                </FunnelIcon>
                <PaneTitle $top={11}>Filters</PaneTitle>
              </Pane>
            </CenterTop>
            <PageBar>
              <ViewSwitch>
                <svg width="191" height="53" viewBox="54 878 191 53" fill="none" stroke="#4a4846" strokeWidth="2">
                  <path d="M73 889.500h26.500v16H73zM86 906v3.500M81 909.500h10" />
                  <path d="M71 922h31.500" stroke="#117865" strokeWidth="4" strokeLinecap="round" />
                  <rect x="144.5" y="886" width="17" height="28" rx="1" /><path d="M151 910h4" />
                  <path d="M201.500 898v12l-7-6Z" fill="#c8c6c4" stroke="none" />
                  <path d="M228 898v12l7-6Z" fill="#000" stroke="none" />
                </svg>
              </ViewSwitch>
              <PageTab>Analysis of Sales Distribution and Profit by ...</PageTab>
              <PageTab $active>Analyzing Customer Returns, Ratings, and...<CloseMark>x</CloseMark></PageTab>
              <PageTab>Exploring Regional Market Dynamics: Sales,...</PageTab>
              <PageTab $w={242}>Analyzing Customer Feedback</PageTab>
              <AddPage>
                <svg width="18" height="18" viewBox="0 0 18 18" stroke="#fff" strokeWidth="4"><path d="M9 1v16M1 9h16" /></svg>
              </AddPage>
            </PageBar>
          </Center>
          <Pane $w={52}><Collapse /><PaneTitle $top={20}>Visualizations</PaneTitle></Pane>
          <Pane $w={51}><Collapse /><PaneTitle $top={20}>Data</PaneTitle></Pane>
        </Main>
        <StatusBar>
          <div>Page 2 of 4</div>
          <ZoomTools>
            <svg width="204" height="23" viewBox="1595 932 204 23" fill="none" stroke="#605e5c">
              <path d="M1596 950h6" strokeWidth="2.2" /><path d="M1609 949.500h150M1684 946v7" strokeWidth="1.3" />
              <rect x="1649" y="941" width="6" height="16" fill="#605e5c" stroke="none" />
              <path d="M1768 949.500h11M1773.500 944v11" strokeWidth="2" />
            </svg>
            <span>62%</span>
            <svg width="25" height="23" viewBox="1862 932 25 23" fill="none" stroke="#5a5856" strokeWidth="1.8">
              <rect x="1863" y="942" width="23" height="16" /><path d="M1867 951v-5h5M1877 946h5v5" strokeWidth="1.5" />
            </svg>
          </ZoomTools>
        </StatusBar>
      </Shell>
    </>
  );
}
